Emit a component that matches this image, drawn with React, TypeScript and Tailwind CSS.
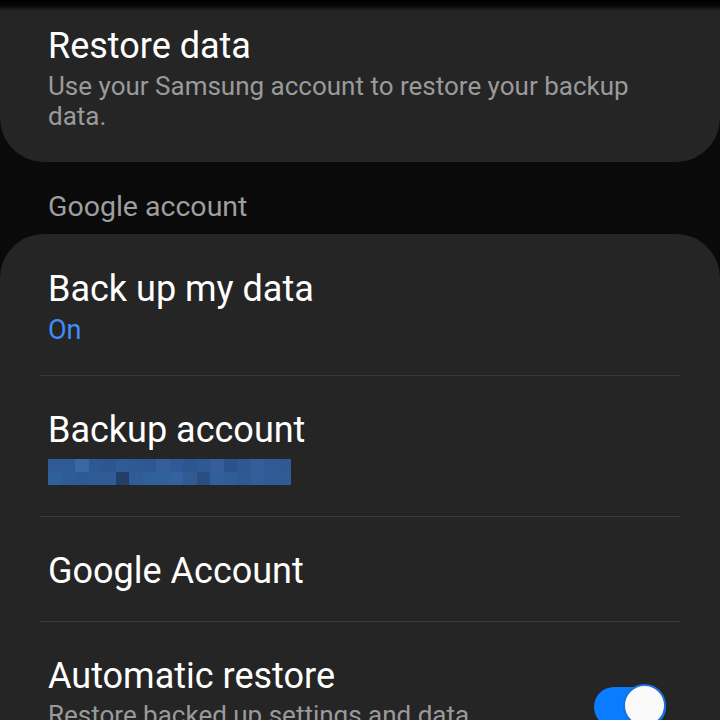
import React from 'react';

const blobColors = [
  ['#2f5a94', '#2e5b95', '#3868a8', '#2d5892', '#2c5690', '#2f5b96', '#2e5993', '#2d5791', '#345f9c', '#2f5a95', '#2c5690', '#2e5a93', '#365f9a', '#2b528a', '#2f5890', '#345e99', '#2f5a94', '#2f5894'],
  ['#30609c', '#2f5c97', '#2e5a94', '#2f5c96', '#2f5b97', '#233f66', '#2f5c97', '#30609c', '#31609c', '#3262a0', '#2f5a94', '#2a4e82', '#30609c', '#305d97', '#2e5a94', '#315e9a', '#2f5c96', '#2f5b95'],
];

const Divider = () => <div className="mx-10 h-px shrink-0 bg-[#3a3a3a]" />;

const App: React.FC = () => {
  return (
    <div
      className="relative w-[720px] h-[720px] overflow-hidden bg-[#0a0a0a] flex flex-col"
      style={{ fontFamily: 'Roboto, "Noto Sans", sans-serif' }}
    >
      {/* top shadow */}
      <div className="absolute top-0 left-0 right-0 h-[11px] bg-gradient-to-b from-black via-black/80 to-transparent z-10" />

      {/* Restore data card */}
      <div className="bg-[#252525] rounded-b-[44px] px-12 pt-[24px] pb-[31px] shrink-0">
        <p className="text-[36px] leading-[44px] text-white">Restore data</p>
        <p className="text-[26px] leading-[30px] text-[#9a9a9a] mt-[3px]">
          Use your Samsung account to restore your backup data.
        </p>
      </div>

      {/* Section header */}
      <div className="px-12 h-[72px] pt-[27px] shrink-0">
        <p className="text-[28.5px] leading-[36px] text-[#9e9e9e]">Google account</p>
      </div>

      {/* Google account card */}
      <div className="bg-[#252525] rounded-t-[44px] flex-1 flex flex-col">
        <div className="px-12 pt-[33px] pb-[28px]">
          <p className="text-[36px] leading-[44px] text-white">Back up my data</p>
          <p className="text-[27px] leading-[34px] text-[#3e8ef5] mt-[2px]">On</p>
        </div>
        <Divider />
        <div className="px-12 pt-[32px] pb-[31px]">
          <p className="text-[36px] leading-[44px] text-white">Backup account</p>
          <div className="mt-[7px] w-[243px] h-[26px] flex flex-col">
            {blobColors.map((row, i) => (
              <div key={i} className="flex flex-1">
                {row.map((c, j) => (
                  <div key={j} className="flex-1" style={{ backgroundColor: c }} />
                ))}
              </div>
            ))}
          </div>
        </div>
        <Divider />
        <div className="px-12 pt-[32px] pb-[28px]">
          <p className="text-[36px] leading-[44px] text-white">Google Account</p>
        </div>
        <Divider />
        <div className="pl-12 pr-[54px] pt-[32px] flex items-start justify-between">
          <div>
            <p className="text-[36px] leading-[44px] text-white">Automatic restore</p>
            <p className="text-[26px] leading-[34px] text-[#9a9a9a]">Restore backed up settings and data</p>
          </div>
          <div className="relative mt-[33px] w-[72px] h-[40px] rounded-full bg-[#0a7cff] shrink-0">
            <div className="absolute right-0 -top-[3px] w-[43px] h-[43px] rounded-full bg-[#fafafa] border-[2px] border-[#1a70dc]" />
          </div>
        </div>
      </div>
    </div>
  );
};

export default App;
